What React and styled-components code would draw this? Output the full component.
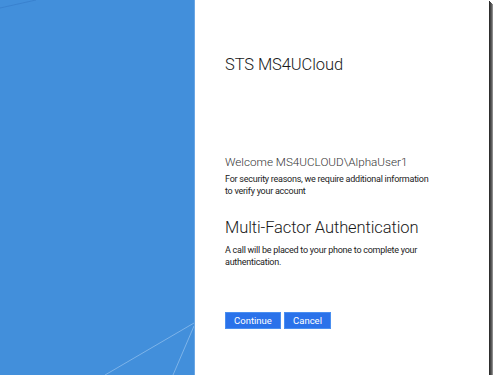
import React from "react";
import styled, { createGlobalStyle } from "styled-components";

const GlobalStyle = createGlobalStyle`
  html, body {
    margin: 0;
    padding: 0;
    background: #ffffff;
  }
  body {
    font-family: Roboto, "Open Sans", sans-serif;
  }
`;

const Frame = styled.div`
  width: 489px;
  height: 375px;
  display: flex;
  background: #ffffff;
  box-shadow: 1px 1px 0 #2e2e2e, 2px 2px 0 #454545, 3px 3px 0 #5e5e5e,
    4px 4px 0 #8a8a8a;
`;

const Illustration = styled.div`
  position: relative;
  width: 194px;
  flex: none;
  background: #428fdb;
  border-right: 1px solid #6aa6e4;
  overflow: hidden;
`;

const Strokes = styled.svg`
  position: absolute;
  inset: 0;
`;

const Content = styled.div`
  flex: 1;
  display: flex;
  flex-direction: column;
  padding: 52px 30px 0 30px;
  color: #222;
`;

const Brand = styled.h1`
  margin: 0;
  font-size: 16.5px;
  font-weight: 300;
  letter-spacing: -0.1px;
  line-height: 26px;
  color: #1a1a1a;
`;

const Welcome = styled.div`
  margin-top: 75px;
  font-size: 11.7px;
  font-weight: 300;
  line-height: 18px;
  color: #333;
`;

const Note = styled.p`
  margin: ${(p) => p.$top || 2}px 0 0 0;
  font-size: 9px;
  letter-spacing: -0.25px;
  line-height: 12px;
  color: #222;
  max-width: 207px;
`;

const Heading = styled.h2`
  margin: 18px 0 0 0;
  font-size: 16.5px;
  font-weight: 300;
  letter-spacing: -0.1px;
  line-height: 26px;
  color: #1a1a1a;
`;

const Actions = styled.div`
  display: flex;
  gap: 3px;
  margin-top: 44px;
`;

const Button = styled.button`
  height: 17px;
  width: ${(p) => p.$w}px;
  padding: 0;
  border: 1px solid #4a8ff0;
  background: #2a72ea;
  color: #ffffff;
  font-family: Roboto, "Open Sans", sans-serif;
  font-size: 9.5px;
  line-height: 15px;
  cursor: pointer;
`;

export default function App() {
  return (
    <>
      <GlobalStyle />
      <Frame>
        <Illustration>
          <Strokes width="194" height="375" viewBox="0 0 194 375">
            <line x1="0" y1="8" x2="36" y2="0" stroke="#3a82cf" strokeWidth="1" />
            <line x1="194" y1="323" x2="105" y2="375" stroke="#8cbcec" strokeWidth="0.8" />
            <line x1="194" y1="326" x2="173" y2="375" stroke="#8cbcec" strokeWidth="0.8" />
          </Strokes>
        </Illustration>
        <Content>
          <Brand>STS MS4UCloud</Brand>
          <Welcome>Welcome MS4UCLOUD\AlphaUser1</Welcome>
          <Note>
            For security reasons, we require additional information to verify
            your account
          </Note>
          <Heading>Multi-Factor Authentication</Heading>
          <Note $top={3}>
            A call will be placed to your phone to complete your
            authentication.
          </Note>
          <Actions>
            <Button $w={56}>Continue</Button>
            <Button $w={47}>Cancel</Button>
          </Actions>
        </Content>
      </Frame>
    </>
  );
}
